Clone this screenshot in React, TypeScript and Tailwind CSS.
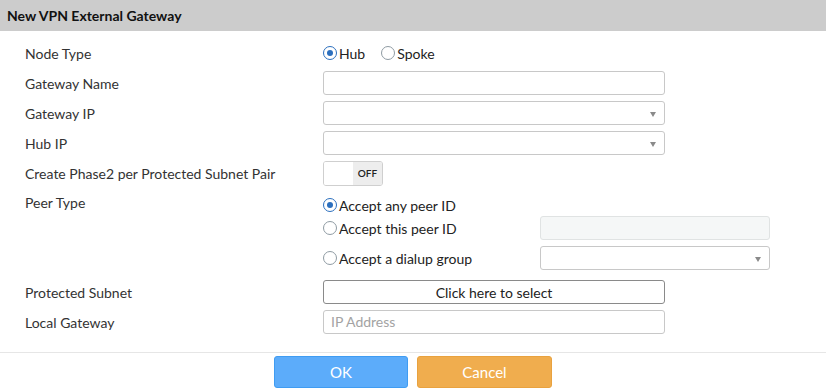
import React from "react";

const Radio = ({ checked }: { checked?: boolean }) => (
  <span
    className={
      "flex h-[14px] w-[14px] shrink-0 items-center justify-center rounded-full border-[1.5px] bg-white " +
      (checked ? "border-[#2b6fbe]" : "border-[#8f9ba3]")
    }
  >
    {checked && <span className="h-[6px] w-[6px] rounded-full bg-[#2b6fbe]" />}
  </span>
);

const RadioOption = ({ label, checked }: { label: string; checked?: boolean }) => (
  <label className="flex items-center gap-[2px] text-[14px] text-[#222]">
    <Radio checked={checked} />
    <span>{label}</span>
  </label>
);

const TextInput = ({ placeholder, disabled, wide }: { placeholder?: string; disabled?: boolean; wide?: boolean }) => (
  <div
    className={
      "h-[24px] rounded-[3px] border px-[7px] text-[14px] leading-[22px] " +
      (wide ? "w-[342px] " : "w-[230px] ") +
      (disabled ? "border-[#e0e3e3] bg-[#f5f7f7]" : "border-[#c8c8c8] bg-white")
    }
  >
    {placeholder && <span className="text-[#a3a3a3]">{placeholder}</span>}
  </div>
);

const Select = ({ wide }: { wide?: boolean }) => (
  <div
    className={
      "relative h-[24px] rounded-[3px] border border-[#c8c8c8] bg-white " +
      (wide ? "w-[342px]" : "w-[230px]")
    }
  >
    <span className="absolute right-[8px] top-[10px] h-0 w-0 border-x-[3.5px] border-t-[5px] border-x-transparent border-t-[#8a8a8a]" />
  </div>
);

const Row = ({ label, children }: { label: string; children: React.ReactNode }) => (
  <div className="flex h-[30px] items-center">
    <div className="w-[298px] text-[14px] text-[#333]">{label}</div>
    <div className="flex items-center">{children}</div>
  </div>
);

export default function App() {
  return (
    <div className="h-[388px] w-[826px] overflow-hidden bg-white font-['Lato',sans-serif]">
      <div className="flex h-[31px] items-center bg-[#cccccc] px-[7px] text-[14px] font-bold text-[#111]">
        New VPN External Gateway
      </div>

      <div className="pl-[25px] pt-[7px]">
        <Row label="Node Type">
          <div className="flex items-center gap-[16px]">
            <RadioOption label="Hub" checked />
            <RadioOption label="Spoke" />
          </div>
        </Row>
        <Row label="Gateway Name">
          <TextInput wide />
        </Row>
        <Row label="Gateway IP">
          <Select wide />
        </Row>
        <Row label="Hub IP">
          <Select wide />
        </Row>
        <Row label="Create Phase2 per Protected Subnet Pair">
          <div className="flex h-[25px] w-[60px] overflow-hidden rounded-[3px] border border-[#cfcfcf]">
            <div className="w-[30px] bg-white" />
            <div className="flex w-[30px] items-center justify-center bg-[#ededed] text-[10px] font-semibold text-[#222]">
              OFF
            </div>
          </div>
        </Row>

        <div className="flex pt-[6px]">
          <div className="w-[298px] text-[14px] leading-[17px] text-[#333]">Peer Type</div>
          <div className="flex flex-col">
            <div className="flex h-[22px] items-center">
              <RadioOption label="Accept any peer ID" checked />
            </div>
            <div className="flex h-[24px] items-center">
              <div className="w-[217px]">
                <RadioOption label="Accept this peer ID" />
              </div>
              <TextInput disabled />
            </div>
            <div className="mt-[6px] flex h-[24px] items-center">
              <div className="w-[217px]">
                <RadioOption label="Accept a dialup group" />
              </div>
              <Select />
            </div>
          </div>
        </div>

        <div className="mt-[7px]">
          <Row label="Protected Subnet">
            <button className="h-[24px] w-[342px] rounded-[3px] border border-[#8a8a8a] bg-white text-[14px] text-[#222]">
              Click here to select
            </button>
          </Row>
          <Row label="Local Gateway">
            <TextInput wide placeholder="IP Address" />
          </Row>
        </div>
      </div>

      <div className="mt-[15px] border-t border-[#e6e6e6] pt-[3px]">
        <div className="flex justify-center gap-[9px]">
          <button className="h-[32px] w-[134px] rounded-[3px] border border-[#3f9cf2] bg-[#5cacfa] text-[15px] text-white">
            OK
          </button>
          <button className="h-[32px] w-[135px] rounded-[3px] border border-[#e9a23f] bg-[#f0ad4e] text-[15px] text-white">
            Cancel
          </button>
        </div>
      </div>
    </div>
  );
}
